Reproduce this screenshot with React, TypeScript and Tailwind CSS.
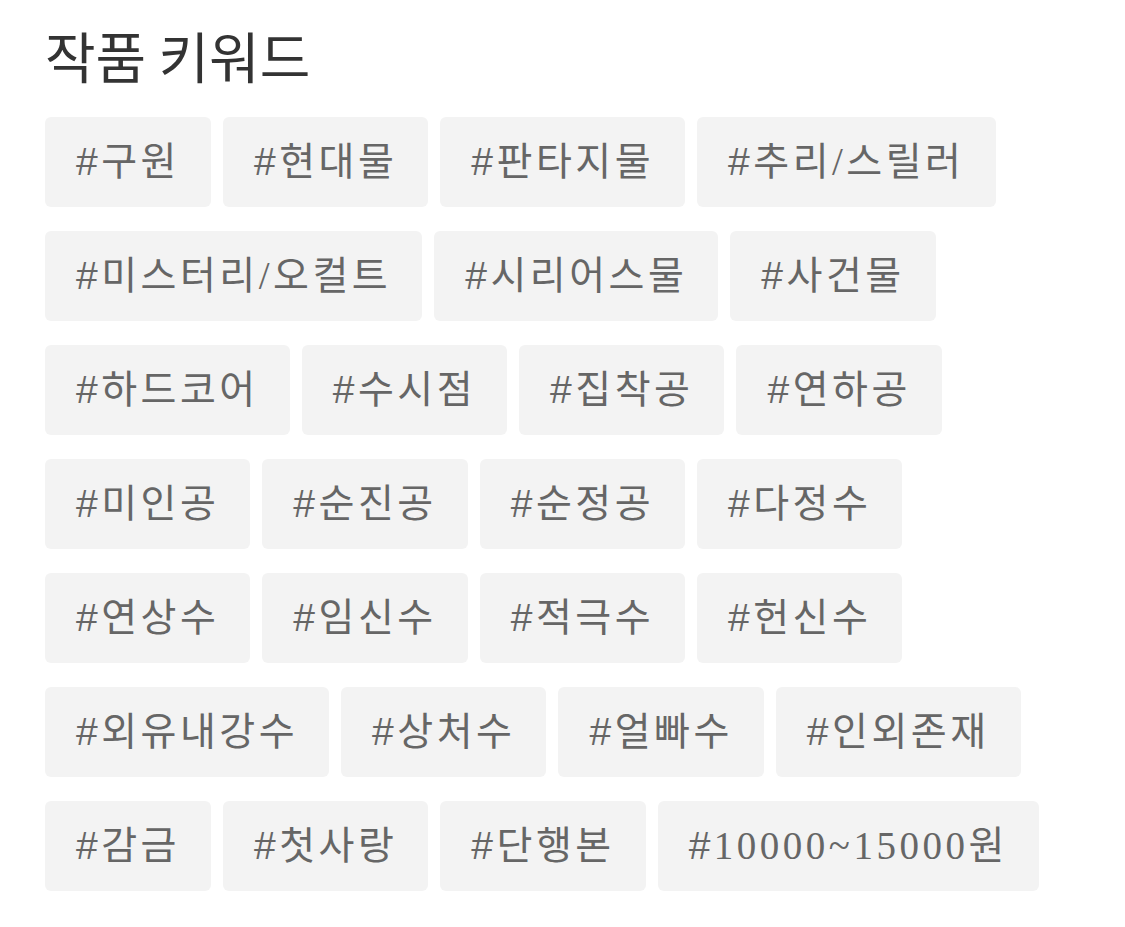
const keywords = [
  "구원", "현대물", "판타지물", "추리/스릴러",
  "미스터리/오컬트", "시리어스물", "사건물",
  "하드코어", "수시점", "집착공", "연하공",
  "미인공", "순진공", "순정공", "다정수",
  "연상수", "임신수", "적극수", "헌신수",
  "외유내강수", "상처수", "얼빠수", "인외존재",
  "감금", "첫사랑", "단행본", "10000~15000원",
];

function KeywordTag({ label }: { label: string }) {
  return (
    <span className="flex h-[90px] items-center rounded-md bg-[#f3f3f3] px-[31px] text-[39px] tracking-[3.5px] text-[#666]">
      <span className="font-['Liberation_Sans',sans-serif]">#</span>
      {label}
    </span>
  );
}

export default function App() {
  return (
    <div className="min-h-screen bg-white px-[45px] pt-[16px] font-['Liberation_Serif','Noto_Sans_CJK_KR',serif]">
      <h2 className="font-['Noto_Sans_CJK_KR',sans-serif] text-[55px] leading-[76px] text-[#333]">
        작품 키워드
      </h2>
      <div className="mt-[25px] flex flex-wrap gap-x-3 gap-y-6">
        {keywords.map((k) => (
          <KeywordTag key={k} label={k} />
        ))}
      </div>
    </div>
  );
}
